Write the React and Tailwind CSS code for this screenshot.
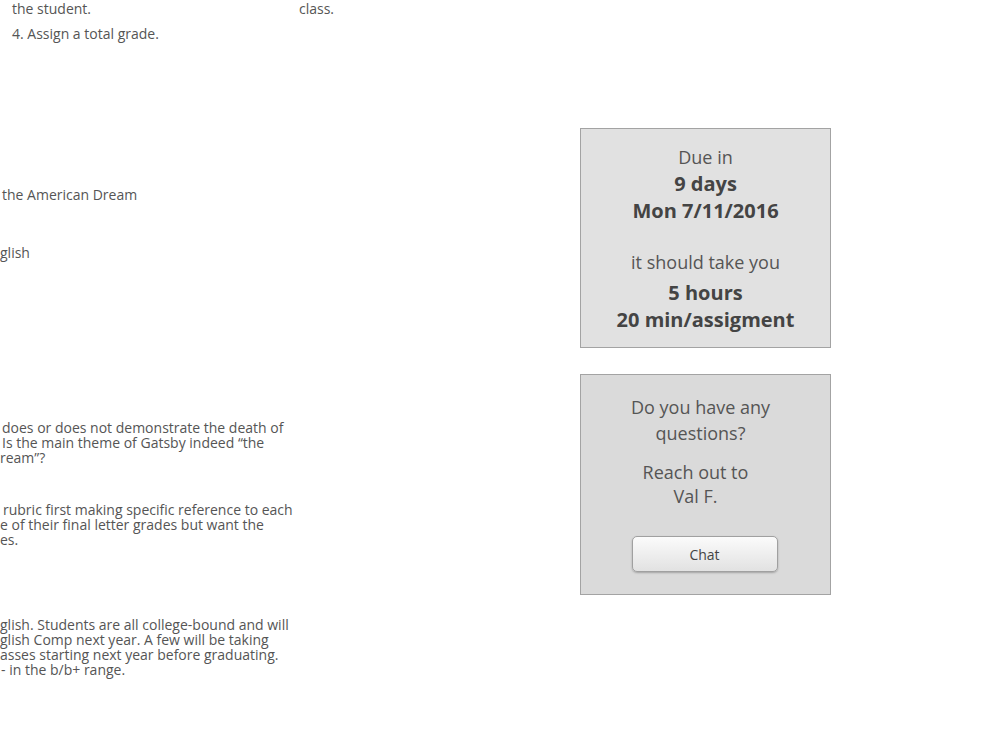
export default function App() {
  const font = { fontFamily: '"Open Sans", "Noto Sans", sans-serif' };

  return (
    <div
      className="w-[1000px] h-[750px] bg-white flex overflow-hidden text-[#555]"
      style={font}
    >
      {/* left: assignment details, scrolled partly off the left edge */}
      <div className="w-[580px] flex-none overflow-hidden text-[14px] leading-[15px]">
        <div className="flex">
          <div className="w-[299px] flex-none pl-[12px]">
            <div className="pt-[1px] leading-[15px]">the student.</div>
            <div className="mt-[10px] leading-[15px]">4. Assign a total grade.</div>
          </div>
          <div className="pt-[1px]">class.</div>
        </div>

        <div className="mt-[146px] pl-[2px] whitespace-nowrap">the American Dream</div>

        <div className="mt-[43px] whitespace-nowrap">glish</div>

        <div className="mt-[160px] whitespace-nowrap">
          <div className="pl-[2px]"> does or does not demonstrate the death of</div>
          <div className="pl-[2px]">Is the main theme of Gatsby indeed “the</div>
          <div>ream”?</div>
        </div>

        <div className="mt-[37px] whitespace-nowrap">
          <div className="pl-[3px]">rubric first making specific reference to each</div>
          <div>e of their final letter grades but want the</div>
          <div>es.</div>
        </div>

        <div className="mt-[70px] whitespace-nowrap">
          <div>glish. Students are all college-bound and will</div>
          <div>glish Comp next year. A few will be taking</div>
          <div>asses starting next year before graduating.</div>
          <div className="pl-[1px]">- in the b/b+ range.</div>
        </div>
      </div>

      {/* right: due-date and help cards */}
      <div className="flex flex-col pt-[128px] gap-[26px]">
        <div className="w-[251px] h-[220px] border border-[#a3a3a3] bg-[#e1e1e1] flex flex-col items-center pt-[15px] text-[#555] text-[18px] leading-[27px]">
          <div>Due in</div>
          <div className="-mt-[1px] font-bold text-[20px] text-[#444]">9 days</div>
          <div className="font-bold text-[20px] text-[#444]">Mon 7/11/2016</div>
          <div className="mt-[25px]">it should take you</div>
          <div className="mt-[3px] font-bold text-[20px] text-[#444]">5 hours</div>
          <div className="font-bold text-[20px] text-[#444]">20 min/assigment</div>
        </div>

        <div className="w-[251px] h-[221px] border border-[#a3a3a3] bg-[#dadada] flex flex-col items-center pt-[19px] text-[18px] text-[#555]">
          <div className="text-center leading-[26px] pr-[10px]">
            Do you have any
            <br />
            questions?
          </div>
          <div className="text-center leading-[24px] mt-[14px] pr-[20px]">
            Reach out to
            <br />
            Val F.
          </div>
          <button className="mt-[28px] mr-[2px] w-[146px] h-[36px] rounded-[5px] border border-[#a0a0a0] bg-gradient-to-b from-[#fbfbfb] to-[#e2e2e2] shadow-[0_1px_2px_rgba(0,0,0,0.25)] text-[14px] text-[#444]">
            Chat
          </button>
        </div>
      </div>
    </div>
  );
}
